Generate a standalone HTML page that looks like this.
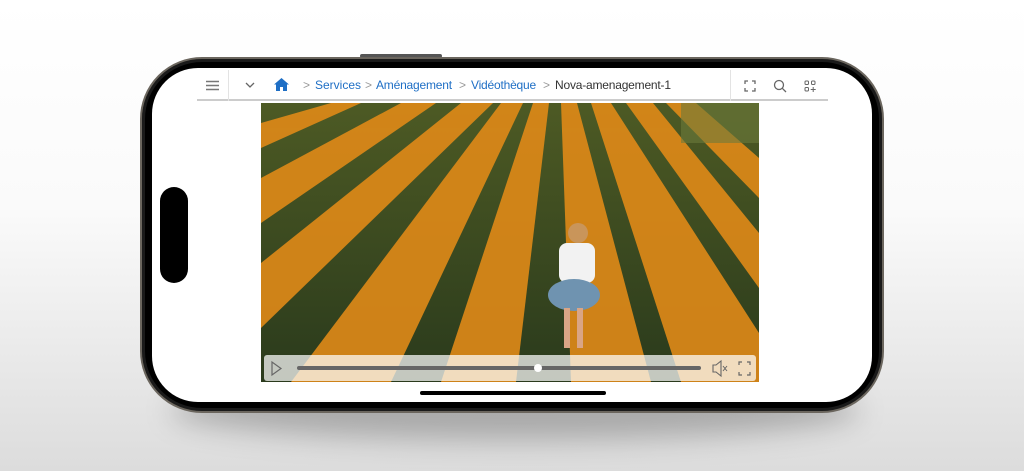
<!DOCTYPE html>
<html><head><meta charset="utf-8"><style>
*{margin:0;padding:0;box-sizing:border-box}
body{width:1024px;height:471px;overflow:hidden;background:linear-gradient(#fff 0%,#fafafa 45%,#dcdcdc 100%);font-family:"Liberation Sans",sans-serif;position:relative}
.shadow{position:absolute;left:170px;top:380px;width:690px;height:60px;border-radius:50%;background:rgba(0,0,0,.25);filter:blur(14px)}
.phone{position:absolute;left:140px;top:57px;width:744px;height:356px;border-radius:62px;background:#000;border:2px solid #6b665e;box-shadow:inset 0 0 0 3px #1a1a1a}
.btn{position:absolute;background:#555;border-radius:2px}
.screen{position:absolute;left:152px;top:68px;width:720px;height:334px;border-radius:46px;background:#fff;overflow:hidden}
.cam{position:absolute;left:160px;top:187px;width:28px;height:96px;border-radius:14px;background:#000}
.bar{position:absolute;left:45px;top:2px;width:631px;height:31px;border-bottom:2px solid #ccc;font-size:12px;color:#999}
.bar span,.bar a{position:absolute;top:8px;white-space:nowrap}
.home{position:absolute;left:420px;top:391px;width:186px;height:4px;border-radius:3px;background:#000}
a{color:#1f6fc5;text-decoration:none}
</style></head><body>
<div class="shadow"></div>
<div class="btn" style="left:360px;top:54px;width:82px;height:4px"></div>
<div class="phone"></div>
<div class="screen">
 <div class="bar">
  <div style="position:absolute;left:0;top:0;width:32px;height:31px;border-right:1px solid #e3e3e3;display:flex;align-items:center;justify-content:center">
   <svg width="13" height="11"><path d="M0 1.5H13M0 5.5H13M0 9.5H13" stroke="#777" stroke-width="1.4"/></svg></div>
  <svg style="position:absolute;left:48px;top:12px" width="10" height="6"><path d="M1 1L5 5L9 1" stroke="#666" fill="none" stroke-width="1.3"/></svg>
  <svg style="position:absolute;left:77px;top:8px" width="15" height="13" viewBox="0 0 15 13"><path d="M7.5 0L15 6.5H13V13H9V9H6V13H2V6.5H0Z" fill="#1f6fc5"/></svg>
  <span style="left:106px">&gt;</span><a style="left:118px">Services</a>
  <span style="left:168px">&gt;</span><a style="left:179px;letter-spacing:-.2px">Aménagement</a>
  <span style="left:262px">&gt;</span><a style="left:274px;letter-spacing:-.2px">Vidéothèque</a>
  <span style="left:346px">&gt;</span><span style="left:358px;color:#333;letter-spacing:-.2px">Nova-amenagement-1</span>
  <div style="position:absolute;left:533px;top:0;width:98px;height:31px;border-left:1px solid #e3e3e3;display:flex;align-items:center;justify-content:space-around;padding:0 4px">
   <svg width="12" height="12"><path d="M1 4V1H4M8 1H11V4M11 8V11H8M4 11H1V8" stroke="#666" fill="none" stroke-width="1.3"/></svg>
   <svg width="14" height="14"><circle cx="6" cy="6" r="4.5" stroke="#666" fill="none" stroke-width="1.3"/><path d="M9.3 9.3L13 13" stroke="#666" stroke-width="1.3"/></svg>
   <svg width="12" height="12"><rect x="1" y="1" width="3.5" height="3.5" rx="1" stroke="#666" fill="none"/><rect x="7.5" y="1" width="3.5" height="3.5" rx="1" stroke="#666" fill="none"/><rect x="1" y="7.5" width="3.5" height="3.5" rx="1" stroke="#666" fill="none"/><path d="M9.2 7V12M6.7 9.5H11.7" stroke="#666"/></svg>
  </div>
 </div>
 <svg style="position:absolute;left:109px;top:35px" width="498" height="279" viewBox="0 0 498 279">
  <defs><linearGradient id="g" x1="0" y1="0" x2="0" y2="1"><stop offset="0" stop-color="#4d5a24"/><stop offset="1" stop-color="#2a3a1c"/></linearGradient></defs>
  <rect width="498" height="279" fill="url(#g)"/>
  <g fill="#e08a18" opacity=".9">
   <polygon points="0,20 70,0 100,0 0,45"/>
   <polygon points="0,75 140,0 175,0 0,120"/>
   <polygon points="0,160 200,0 232,0 0,225"/>
   <polygon points="30,279 240,0 262,0 130,279"/>
   <polygon points="180,279 272,0 288,0 255,279"/>
   <polygon points="310,279 300,0 316,0 390,279"/>
   <polygon points="420,279 330,0 350,0 498,230 498,279"/>
   <polygon points="498,185 365,0 392,0 498,130"/>
   <polygon points="498,95 405,0 435,0 498,55"/>
  </g>
  <rect x="420" y="0" width="78" height="40" fill="#6d7a3a" opacity=".6"/>
  <circle cx="317" cy="130" r="10" fill="#c9955a"/>
  <rect x="298" y="140" width="36" height="40" rx="8" fill="#f2f2f2"/>
  <ellipse cx="313" cy="192" rx="26" ry="16" fill="#6f93b0"/>
  <rect x="303" y="205" width="6" height="40" fill="#d9a586"/><rect x="316" y="205" width="6" height="40" fill="#d9a586"/>
  <rect x="3" y="252" width="492" height="26" rx="3" fill="#fff" opacity=".72"/>
  <path d="M11 259V272L20 265.5Z" fill="none" stroke="#666" stroke-width="1.2"/>
  <rect x="36" y="263" width="404" height="4" rx="2" fill="#666"/>
  <circle cx="277" cy="265" r="4" fill="#fff"/>
  <path d="M452 262H455L460 258V273L455 269H452Z" fill="none" stroke="#666" stroke-width="1.1"/><path d="M462 263L466 268M466 263L462 268" stroke="#666"/>
  <path d="M478 262V259H481M486 259H489V262M489 269V272H486M481 272H478V269" stroke="#666" fill="none" stroke-width="1.2"/>
 </svg>
</div>
<div class="cam"></div>
<div class="home"></div>
</body></html>
